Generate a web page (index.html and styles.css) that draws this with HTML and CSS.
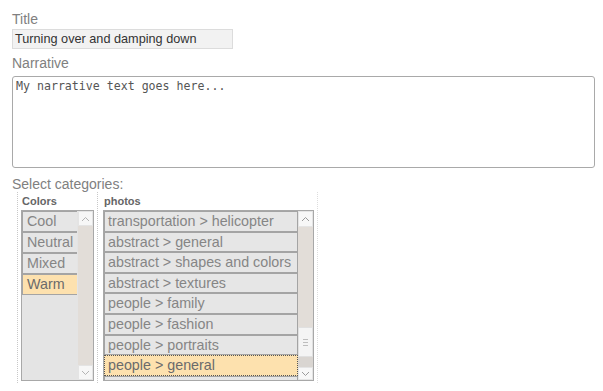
FILE: index.html
```html
<!DOCTYPE html>
<html>
<head>
<meta charset="utf-8">
<link rel="stylesheet" href="styles.css">
</head>
<body>
<div class="form">
  <div class="label">Title</div>
  <div class="title-input">Turning over and damping down</div>
  <div class="label label-narr">Narrative</div>
  <div class="textarea">My narrative text goes here...</div>
  <div class="label label-cat">Select categories:</div>
  <div class="columns">
    <div class="col col-colors">
      <div class="col-label">Colors</div>
      <div class="listbox lb-colors">
        <div class="items">
          <div class="item c-item">Cool</div>
          <div class="item c-item">Neutral</div>
          <div class="item c-item">Mixed</div>
          <div class="item c-item selected">Warm</div>
        </div>
        <div class="sbar">
          <div class="sbtn up"><svg width="9" height="6" viewBox="0 0 9 6"><polyline points="1,5 4.5,1.5 8,5" fill="none" stroke="#b4b4b4" stroke-width="1"/></svg></div>
          <div class="track"></div>
          <div class="sbtn down"><svg width="9" height="6" viewBox="0 0 9 6"><polyline points="1,1 4.5,4.5 8,1" fill="none" stroke="#b4b4b4" stroke-width="1"/></svg></div>
        </div>
      </div>
    </div>
    <div class="col col-photos">
      <div class="col-label">photos</div>
      <div class="listbox lb-photos">
        <div class="items">
          <div class="item p-item">transportation &gt; helicopter</div>
          <div class="item p-item">abstract &gt; general</div>
          <div class="item p-item">abstract &gt; shapes and colors</div>
          <div class="item p-item">abstract &gt; textures</div>
          <div class="item p-item">people &gt; family</div>
          <div class="item p-item">people &gt; fashion</div>
          <div class="item p-item">people &gt; portraits</div>
          <div class="item p-item selected focused">people &gt; general</div>
          <div class="item p-item">people &gt; lifestyle</div>
        </div>
        <div class="sbar">
          <div class="sbtn up tall"><svg width="9" height="6" viewBox="0 0 9 6"><polyline points="1,5 4.5,1.5 8,5" fill="none" stroke="#9a9a9a" stroke-width="1"/></svg></div>
          <div class="track track-top"></div>
          <div class="thumb"><span class="grip"></span><span class="grip"></span><span class="grip"></span></div>
          <div class="track track-bottom"></div>
          <div class="sbtn down"><svg width="9" height="6" viewBox="0 0 9 6"><polyline points="1,1 4.5,4.5 8,1" fill="none" stroke="#9a9a9a" stroke-width="1"/></svg></div>
        </div>
      </div>
    </div>
  </div>
</div>
</body>
</html>
```

FILE: styles.css
```css
html, body {
  margin: 0;
  padding: 0;
  background: #ffffff;
}
body {
  font-family: "Liberation Sans", Arial, sans-serif;
}
.form {
  padding: 11px 0 0 12px;
  display: flex;
  flex-direction: column;
  align-items: flex-start;
}
.label {
  font-size: 14px;
  line-height: 16px;
  color: #808080;
}
.title-input {
  margin-top: 2px;
  box-sizing: border-box;
  width: 221px;
  height: 20px;
  border: 1px solid #dcdcdc;
  background: #f2f2f2;
  font-size: 12.7px;
  line-height: 18px;
  padding-left: 2px;
  color: #333;
  white-space: nowrap;
}
.label-narr {
  margin-top: 6px;
}
.textarea {
  margin-top: 5px;
  box-sizing: border-box;
  width: 583px;
  height: 92px;
  border: 1px solid #a9a9a9;
  border-radius: 3px;
  padding: 2px 3px;
  font-family: "DejaVu Sans Mono", monospace;
  font-size: 11.6px;
  line-height: 14px;
  color: #555;
}
.label-cat {
  margin-top: 8px;
}
.columns {
  display: flex;
  margin-left: 5px;
}
.col {
  border-left: 1px dotted #c8c8c8;
  padding: 3px 3px 2px 3px;
}
.col-photos {
  padding-left: 5px;
  border-right: 1px dotted #dddddd;
}
.col-label {
  font-size: 11px;
  line-height: 13px;
  font-weight: bold;
  color: #666;
  padding-left: 1px;
  margin-bottom: 2px;
}
.listbox {
  box-sizing: border-box;
  height: 171px;
  border: 1px solid #a8a8a8;
  background: #e4e4e4;
  display: flex;
  overflow: hidden;
}
.lb-colors {
  width: 73px;
}
.lb-photos {
  width: 211px;
}
.items {
  flex: 1;
  overflow: hidden;
}
.item {
  box-sizing: border-box;
  border: 1px solid #a4a4a4;
  background: #e6e6e6;
  color: #858585;
  font-size: 14.3px;
  white-space: nowrap;
  overflow: hidden;
}
.c-item {
  height: 21px;
  line-height: 19px;
  padding-left: 4px;
  width: 56px;
}
.p-item {
  height: 20.6px;
  line-height: 18px;
  padding-left: 3px;
}
.item.selected {
  background: #fde1ae;
  color: #6b6b6b;
}
.item.focused {
  border: 1px dotted #555;
}
.sbar {
  width: 15px;
  display: flex;
  flex-direction: column;
  flex-shrink: 0;
}
.lb-colors .sbar {
  margin-left: 1px;
}
.sbtn {
  height: 15px;
  background: #f7f7f7;
  display: flex;
  align-items: center;
  justify-content: center;
  flex-shrink: 0;
  box-sizing: border-box;
  border: 1px solid #e4e4e4;
}
.sbtn.tall {
  height: 16px;
}
.lb-photos .sbtn.down {
  height: 13px;
}
.track {
  flex: 1;
  background: #e2ddd8;
}
.track-top {
  flex: 1;
}
.track-bottom {
  flex: 0 0 10px;
  background: #d9d5d1;
}
.thumb {
  height: 30px;
  flex-shrink: 0;
  background: #f4f4f4;
  box-sizing: border-box;
  border: 1px solid #e0e0e0;
  display: flex;
  flex-direction: column;
  align-items: center;
  justify-content: center;
  gap: 2px;
}
.grip {
  display: block;
  width: 5px;
  height: 1px;
  background: #bdbdbd;
}
```
